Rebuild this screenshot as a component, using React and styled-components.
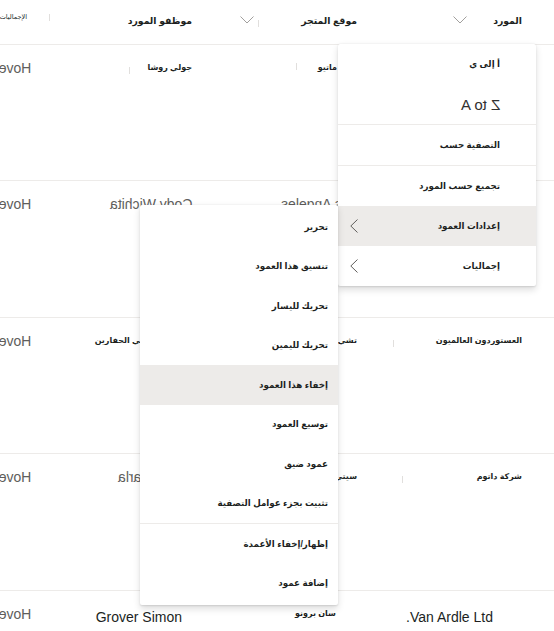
import React from "react";
import styled, { createGlobalStyle } from "styled-components";

const GlobalStyle = createGlobalStyle`
  html, body { margin: 0; padding: 0; background: #fff; }
  body {
    font-family: "Liberation Sans", "DejaVu Sans", sans-serif;
    color: #201f1e;
  }
`;

const Page = styled.div`
  position: relative;
  width: 554px;
  height: 631px;
  overflow: hidden;
  background: #fff;
  direction: rtl;
`;

const Grid = styled.div`
  display: grid;
  grid-template-columns: repeat(4, 165px);
  width: 660px;
  box-sizing: border-box;
  height: ${p => p.$h}px;
  border-bottom: 1px solid #edebe9;
`;

const HeadCell = styled.div`
  display: flex;
  align-items: center;
  padding-right: 32px;
  padding-bottom: ${p => (p.$tiny ? 10 : 4)}px;
  font-size: ${p => (p.$tiny ? "6.5px" : "9.3px")};
  font-weight: ${p => (p.$tiny ? "normal" : "bold")};
  color: #201f1e;
  white-space: nowrap;
  position: relative;
`;

const Chevron = styled.svg`
  width: 14px;
  height: 8px;
  margin-right: ${p => p.$gap}px;
  flex: none;
`;

const Tick = styled.span`
  position: absolute;
  top: ${p => p.$top}px;
  left: ${p => p.$left}px;
  width: 1px;
  height: 7px;
  background: #e1dfdd;
`;

const Cell = styled.div`
  position: relative;
  padding-right: ${p => (p.$pr != null ? p.$pr : 32)}px;
  padding-top: 18px;
  font-size: ${p => (p.$big ? "14px" : "8px")};
  font-weight: ${p => (p.$big ? "normal" : "bold")};
  color: #201f1e;
  white-space: nowrap;
  line-height: 1.2;
`;

const Mirror = styled.span`
  display: inline-block;
  transform: scaleX(-1);
  font-size: 14px;
  font-weight: normal;
  color: #605e5c;
  margin-top: -3px;
`;

const Menu = styled.div`
  position: absolute;
  top: ${p => p.$top}px;
  left: ${p => p.$left}px;
  width: 198px;
  background: #fff;
  box-shadow: 0 3.2px 7.2px rgba(0, 0, 0, 0.13), 0 0.6px 1.8px rgba(0, 0, 0, 0.11);
  border-radius: 2px;
  padding: ${p => p.$pad || "0"};
  box-sizing: border-box;
`;

const Item = styled.div`
  display: flex;
  align-items: center;
  height: ${p => p.$h || 40}px;
  padding-right: ${p => p.$pr}px;
  padding-left: 12px;
  font-size: 8.7px;
  font-weight: bold;
  color: #201f1e;
  background: ${p => (p.$active ? "#edebe9" : "transparent")};
  white-space: nowrap;
`;

const ItemText = styled.span`
  flex: 1;
`;

const Divider = styled.div`
  height: 1px;
  background: #edebe9;
`;

const MirrorItem = styled.span`
  display: inline-block;
  transform: scaleX(-1);
  font-weight: normal;
  font-size: 15px;
  color: #323130;
`;

const Down = ({ gap }) => (
  <Chevron $gap={gap} viewBox="0 0 14 8">
    <polyline points="0.5,0.5 7,7 13.5,0.5" fill="none" stroke="#a19f9d" strokeWidth="1" />
  </Chevron>
);

const Left = () => (
  <svg width="8" height="14" viewBox="0 0 8 14">
    <polyline points="7.5,0.5 0.8,7 7.5,13.5" fill="none" stroke="#605e5c" strokeWidth="1" />
  </svg>
);

const rows = [
  { c1: "", c2: "سان ماتيو", c3: "جولي روشا", t2: 72, t3: 70 },
  { c1: "", c2: <Mirror>Los Angeles</Mirror>, c3: <Mirror>Cody Wichita</Mirror> },
  { c1: "العستوردون العالميون", c2: "تشي", c3: "جمعية مهندسي الحفارين", t1: 4 },
  { c1: "شركة داتوم", c2: "سيتي", c3: <Mirror>Jesse Darla</Mirror>, t1: 13 },
];

export default function App() {
  return (
    <Page>
      <GlobalStyle />
      <Grid $h={45}>
        <HeadCell>
          المورد
          <Down gap={26} />
        </HeadCell>
        <HeadCell>
          موقع المتجر
          <Down gap={47} />
          <Tick $top={20} $left={34} />
        </HeadCell>
        <HeadCell>موظفو المورد</HeadCell>
        <HeadCell $tiny>
          الإجماليات
          <Tick $top={14} $left={155} />
        </HeadCell>
      </Grid>
      {rows.map((r, i) => (
        <Grid key={i} $h={i % 2 ? 137 : 136}>
          <Cell>
            {r.c1}
            {r.t1 && <Tick $top={22} $left={r.t1} />}
          </Cell>
          <Cell>
            {r.c2}
            {r.t2 && <Tick $top={18} $left={r.t2} />}
          </Cell>
          <Cell>
            {r.c3}
            {r.t3 && <Tick $top={22} $left={r.t3} />}
          </Cell>
          <Cell $pr={28}>
            <Mirror>Hover</Mirror>
          </Cell>
        </Grid>
      ))}
      <Grid $h={45}>
        <Cell $big $pr={61}>Van Ardle Ltd.</Cell>
        <Cell $pr={53}>سان برونو</Cell>
        <Cell $big $pr={42}>Grover Simon</Cell>
        <Cell $pr={28}>
          <Mirror>Hover</Mirror>
        </Cell>
      </Grid>

      <Menu $top={44} $left={338}>
        <Item $pr={36}>
          <ItemText>أ إلى ي</ItemText>
        </Item>
        <Item $pr={36}>
          <ItemText>
            <MirrorItem>Z to A</MirrorItem>
          </ItemText>
        </Item>
        <Divider />
        <Item $pr={36}>
          <ItemText>التصفية حسب</ItemText>
        </Item>
        <Divider />
        <Item $pr={36}>
          <ItemText>تجميع حسب المورد</ItemText>
        </Item>
        <Item $pr={36} $active>
          <ItemText>إعدادات العمود</ItemText>
          <Left />
        </Item>
        <Item $pr={36}>
          <ItemText>إجماليات</ItemText>
          <Left />
        </Item>
      </Menu>

      <Menu $top={205} $left={140} $pad="2px 0">
        <Item $pr={10} $h={39.5}><ItemText>تحرير</ItemText></Item>
        <Item $pr={10} $h={39.5}><ItemText>تنسيق هذا العمود</ItemText></Item>
        <Item $pr={10} $h={39.5}><ItemText>تحريك لليسار</ItemText></Item>
        <Item $pr={10} $h={39.5}><ItemText>تحريك لليمين</ItemText></Item>
        <Item $pr={10} $h={39.5} $active><ItemText>إخفاء هذا العمود</ItemText></Item>
        <Item $pr={10} $h={39.5}><ItemText>توسيع العمود</ItemText></Item>
        <Item $pr={10} $h={39.5}><ItemText>عمود ضيق</ItemText></Item>
        <Item $pr={10} $h={39.5}><ItemText>تثبيت بجزء عوامل التصفية</ItemText></Item>
        <Divider />
        <Item $pr={10} $h={39.5}><ItemText>إظهار/إخفاء الأعمدة</ItemText></Item>
        <Item $pr={10} $h={39.5}><ItemText>إضافة عمود</ItemText></Item>
      </Menu>
    </Page>
  );
}
